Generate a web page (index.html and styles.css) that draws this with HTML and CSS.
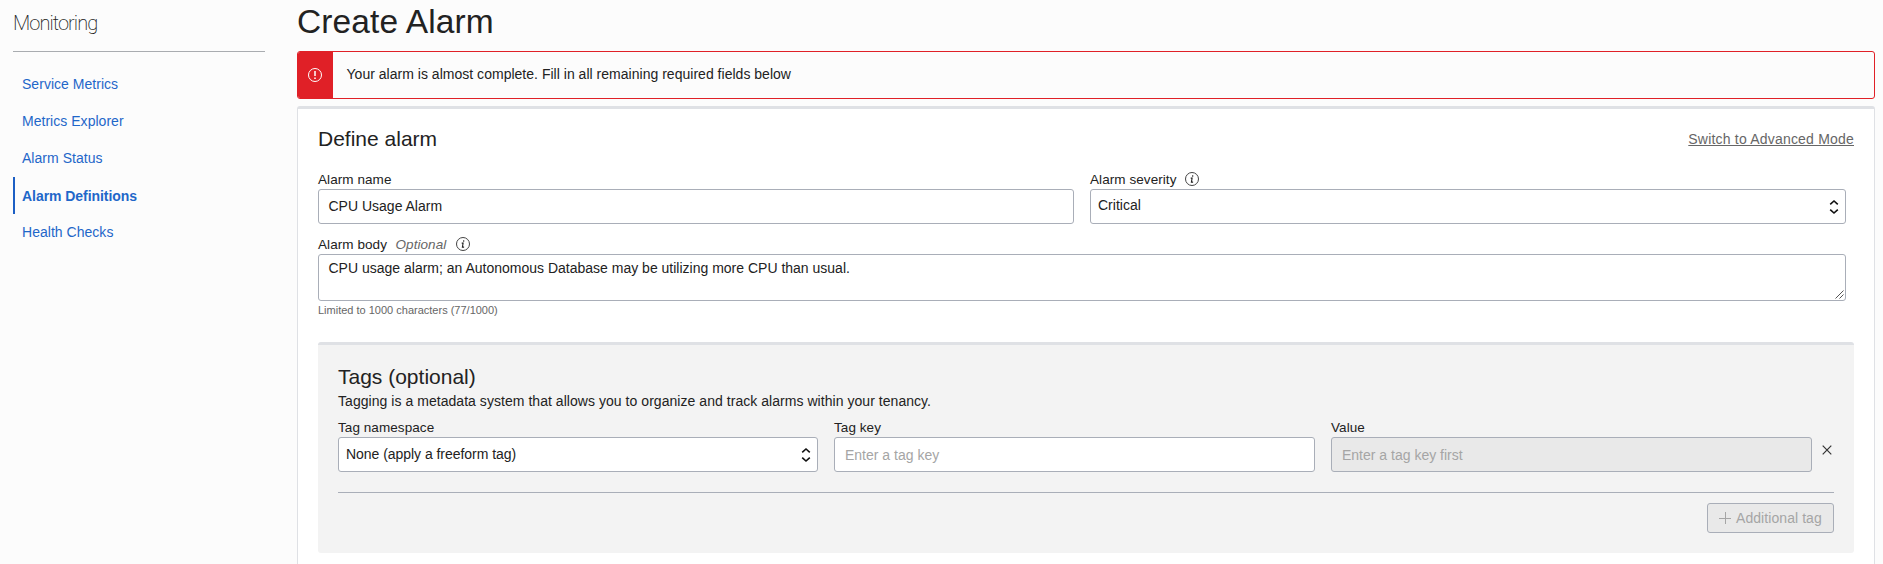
FILE: index.html
```html
<!DOCTYPE html>
<html lang="en">
<head>
<meta charset="utf-8">
<title>Create Alarm</title>
<link rel="stylesheet" href="styles.css">
</head>
<body>
<div class="page">
  <aside class="sidebar">
    <h2 class="sidebar-title">Monitoring</h2>
    <nav class="nav">
      <a class="nav-link">Service Metrics</a>
      <a class="nav-link">Metrics Explorer</a>
      <a class="nav-link">Alarm Status</a>
      <a class="nav-link active">Alarm Definitions</a>
      <a class="nav-link">Health Checks</a>
    </nav>
  </aside>
  <main class="main">
    <h1 class="title">Create Alarm</h1>
    <div class="alert">
      <div class="alert-mark">
        <svg width="16" height="16" viewBox="0 0 16 16" fill="none" stroke="#fff"><circle cx="8" cy="8" r="6.5"/><path d="M8 4v5M8 10.4v1.6" stroke-width="1.5"/></svg>
      </div>
      <p class="alert-text">Your alarm is almost complete. Fill in all remaining required fields below</p>
    </div>
    <section class="card">
      <div class="card-head">
        <h2 class="heading">Define alarm</h2>
        <a class="switch">Switch to Advanced Mode</a>
      </div>
      <div class="row two">
        <div class="field">
          <div class="label"><span>Alarm name</span></div>
          <div class="control"><span>CPU Usage Alarm</span></div>
        </div>
        <div class="field">
          <div class="label"><span>Alarm severity</span>
            <svg class="info" width="16" height="16" viewBox="0 0 16 16"><circle cx="8" cy="8" r="6.5" fill="none" stroke="#444"/><path d="M8.7 4.3v1.4M6.7 7.1h1.4L7.4 11.1h1.7" fill="none" stroke="#222" stroke-width="1.1"/></svg>
          </div>
          <div class="control select"><span>Critical</span>
            <svg class="chev" width="10" height="16" viewBox="0 0 10 16" fill="none" stroke="#111" stroke-width="1.6"><path d="M1.2 5.4 5 2l3.8 3.4M1.2 10.6 5 14l3.8-3.4"/></svg>
          </div>
        </div>
      </div>
      <div class="body-field">
        <div class="label"><span>Alarm body</span><em class="optional">Optional</em>
          <svg class="info" width="16" height="16" viewBox="0 0 16 16"><circle cx="8" cy="8" r="6.5" fill="none" stroke="#444"/><path d="M8.7 4.3v1.4M6.7 7.1h1.4L7.4 11.1h1.7" fill="none" stroke="#222" stroke-width="1.1"/></svg>
        </div>
        <div class="control area"><span>CPU usage alarm; an Autonomous Database may be utilizing more CPU than usual.</span>
          <svg class="grip" width="9" height="9" viewBox="0 0 9 9" stroke="#555" stroke-width="1"><path d="M.5 8.5l8-8M4.5 8.5l4-4"/></svg>
        </div>
        <p class="hint">Limited to 1000 characters (77/1000)</p>
      </div>
      <section class="tags">
        <h2 class="heading">Tags (optional)</h2>
        <p class="tags-text">Tagging is a metadata system that allows you to organize and track alarms within your tenancy.</p>
        <div class="row three">
          <div class="field">
            <div class="label"><span>Tag namespace</span></div>
            <div class="control select none"><span>None (apply a freeform tag)</span>
              <svg class="chev" width="10" height="16" viewBox="0 0 10 16" fill="none" stroke="#111" stroke-width="1.6"><path d="M1.2 5.4 5 2l3.8 3.4M1.2 10.6 5 14l3.8-3.4"/></svg>
            </div>
          </div>
          <div class="field">
            <div class="label"><span>Tag key</span></div>
            <div class="control placeholder"><span>Enter a tag key</span></div>
          </div>
          <div class="field">
            <div class="label"><span>Value</span></div>
            <div class="control placeholder disabled"><span>Enter a tag key first</span></div>
          </div>
          <svg class="close" width="10" height="10" viewBox="0 0 10 10" stroke="#333" stroke-width="1.2"><path d="M.7.7l8.6 8.6M9.3.7L.7 9.3"/></svg>
        </div>
        <div class="actions">
          <button class="add" disabled>
            <svg width="12" height="12" viewBox="0 0 12 12" stroke="#a5a5a5"><path d="M0 6.5h12M6.5 0v12"/></svg>
            <span>Additional tag</span>
          </button>
        </div>
      </section>
    </section>
  </main>
</div>
</body>
</html>
```
FILE: styles.css
```css
* { box-sizing: border-box; margin: 0; }
body { background: #fcfcfc; color: #222; font: 14px/20px "Liberation Sans", Arial, sans-serif; }
.page { display: flex; height: 564px; overflow: hidden; }
.sidebar { width: 297px; padding: 0 32px 0 13px; }
.sidebar-title { height: 52px; border-bottom: 1px solid #a9acb0; padding-top: 11px; font: 200 20px/24px Roboto, sans-serif; letter-spacing: -.95px; color: #222; }
.nav { display: flex; flex-direction: column; padding-top: 14px; }
.nav-link { height: 37px; line-height: 36px; padding-left: 9px; color: #1f67c9; letter-spacing: .03px; }
.nav-link.active { border-left: 2px solid #1c5fc4; padding-left: 7px; line-height: 38px; font-weight: 700; letter-spacing: -.05px; }
.main { width: 1578px; }
.title { height: 51px; font-size: 33.5px; line-height: 43px; font-weight: 400; letter-spacing: .1px; }
.alert { display: flex; height: 48px; border: 1px solid #e02027; border-radius: 3px; overflow: hidden; }
.alert-mark { display: flex; width: 35px; align-items: center; justify-content: center; padding-right: 1px; background: #e02027; }
.alert-text { padding-left: 13.5px; line-height: 45px; letter-spacing: .02px; }
.card { margin-top: 7px; height: 500px; border: 1px solid #dfe1e5; border-top: 3px solid #dfe1e5; border-radius: 3px; background: #fff; padding: 18px 20px 0; }
.card-head { display: flex; justify-content: space-between; height: 44px; }
.heading { font-size: 21px; line-height: 24px; font-weight: 400; }
.switch { padding-top: 2px; color: #666; text-decoration: underline; letter-spacing: .2px; }
.row { display: grid; column-gap: 16px; }
.two { grid-template-columns: 756px 756px; }
.label { display: flex; align-items: center; height: 18px; font-size: 13.5px; line-height: 18px; letter-spacing: .07px; }
.control { display: flex; position: relative; height: 35px; border: 1px solid #a9aeb8; border-radius: 3px; background: #fff; padding-left: 9.5px; line-height: 33px; }
.select { padding-left: 7px; line-height: 31px; }
.none { line-height: 33px; }
.none span { letter-spacing: -.04px; }
.chev { margin: 9px 6px 0 auto; }
.area { width: 1528px; height: 47px; line-height: 26px; }
.grip { position: absolute; right: 1px; bottom: 1px; }
.info { margin: 0 0 2px 7.5px; }
.optional { margin-left: 8.5px; color: #666; }
.optional + .info { margin-left: 8.5px; }
.body-field { padding-top: 12px; }
.hint { padding-top: 1px; font-size: 11px; line-height: 16px; color: #666; }
.tags { height: 211px; margin-top: 24px; border-top: 3px solid #dfe1e5; border-radius: 3px; background: #f3f3f3; padding: 20px 20px 0; }
.tags-text { padding-top: 2px; letter-spacing: .045px; }
.three { grid-template-columns: 480px 481px 481px 10px; padding: 8px 0 20px; border-bottom: 1px solid #a9aeb8; }
.close { margin: 26px 0 0 -6px; }
.placeholder { color: #a5a5a5; padding-left: 10px; line-height: 35px; }
.disabled { background: #e9e9e9; }
.actions { display: flex; justify-content: flex-end; padding-top: 10px; }
.add { display: flex; align-items: center; gap: 5px; width: 127px; height: 30px; padding: 0 0 0 11px; border: 1px solid #a9aeb8; border-radius: 3px; background: #e9e9e9; color: #a5a5a5; font: 14px/20px "Liberation Sans", Arial, sans-serif; letter-spacing: .07px; }
```
